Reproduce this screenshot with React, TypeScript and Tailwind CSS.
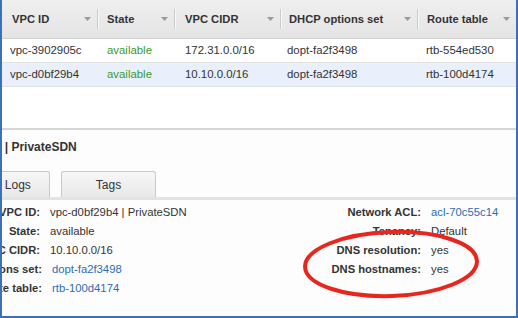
import React from "react"

const columns = [
  { title: "VPC ID", width: "w-[95px]", pad: "pl-[10px]", sep: false },
  { title: "State", width: "w-[77px]", pad: "pl-[9px]", sep: true },
  { title: "VPC CIDR", width: "w-[106px]", pad: "pl-[10px]", sep: true },
  { title: "DHCP options set", width: "w-[137px]", pad: "pl-[8px]", sep: true },
  { title: "Route table", width: "flex-1", pad: "pl-[9px]", sep: true },
]

const rows = [
  { id: "vpc-3902905c", state: "available", cidr: "172.31.0.0/16", dhcp: "dopt-fa2f3498", route: "rtb-554ed530", selected: false },
  { id: "vpc-d0bf29b4", state: "available", cidr: "10.10.0.0/16", dhcp: "dopt-fa2f3498", route: "rtb-100d4174", selected: true },
]

function Caret() {
  return (
    <svg width="7" height="4" viewBox="0 0 7 4" className="mr-[6px] shrink-0">
      <path d="M0 0 L7 0 L3.5 4 Z" fill="#9a9a9a" />
    </svg>
  )
}

function Detail({ label, value, link, labelWidth }: { label: string; value: string; link?: boolean; labelWidth: string }) {
  return (
    <div className="flex h-[19px] items-center">
      <span className={`${labelWidth} shrink-0 text-right font-bold whitespace-nowrap text-[11.2px]`}>{label}</span>
      <span className={`ml-[10px] whitespace-nowrap text-[11.3px] ${link ? "text-[#2b6cb8]" : "text-[#333]"}`}>
        {value}
      </span>
    </div>
  )
}

export default function App() {
  return (
    <div className="relative w-[518px] h-[318px] overflow-hidden bg-white border-x-2 border-b-2 border-[#3d71b3] font-['Liberation_Sans',Arial,sans-serif] text-[#333]">
      {/* table header */}
      <div className="flex h-[39px] bg-gradient-to-b from-[#efefef] to-[#e4e4e4] border-b border-[#d0d0d0]">
        {columns.map((col) => (
          <div key={col.title} className={`${col.width} flex items-center`}>
            {col.sep && <div className="h-[20px] w-px bg-[#cbcbcb] shadow-[1px_0_0_#f8f8f8]" />}
            <span className={`${col.pad} font-bold text-[11.2px] whitespace-nowrap`}>{col.title}</span>
            <div className="flex-1" />
            <Caret />
          </div>
        ))}
      </div>

      {/* table rows */}
      {rows.map((r) => (
        <div
          key={r.id}
          className={`flex h-[24px] items-center border-b border-[#e2e2e2] text-[11.4px] ${r.selected ? "bg-[#e9f0fb]" : "bg-white"}`}
        >
          <div className="w-[95px] pl-[8px]">{r.id}</div>
          <div className="w-[77px] pl-[10px] text-[#3a9a2e]">{r.state}</div>
          <div className="w-[106px] pl-[11px]">{r.cidr}</div>
          <div className="w-[137px] pl-[7px]">{r.dhcp}</div>
          <div className="flex-1 pl-[9px]">{r.route}</div>
        </div>
      ))}

      <div className="h-[41px]" />

      {/* details panel */}
      <div className="border-t-2 border-[#d6d6d6] bg-[#fdfdfd] h-full">
        <div className="pt-[10px] h-[24px] whitespace-nowrap font-bold text-[12px] leading-[14px]">
          <span className="-ml-[78px]">vpc-d0bf29b4 | PrivateSDN</span>
        </div>
        <div className="flex mt-[17px] h-[26px] items-end text-[12px]">
          <div className="-ml-[45px] w-[93px] h-[26px] shrink-0 flex items-center justify-center whitespace-nowrap rounded-t-[3px] border border-b-0 border-[#c9c9c9] bg-gradient-to-b from-[#f7f7f7] to-[#e8e8e8]">
            Flow Logs
          </div>
          <div className="ml-[11px] w-[95px] h-[26px] shrink-0 flex items-center justify-center rounded-t-[3px] border border-b-0 border-[#c9c9c9] bg-gradient-to-b from-[#f7f7f7] to-[#e8e8e8]">
            Tags
          </div>
        </div>
        <div className="border-t-[3px] border-[#e3e3e3] pt-[3px] flex">
          <div className="w-[391px] shrink-0 -ml-[92px]">
            <Detail labelWidth="w-[130px]" label="VPC ID:" value="vpc-d0bf29b4 | PrivateSDN" />
            <Detail labelWidth="w-[130px]" label="State:" value="available" />
            <Detail labelWidth="w-[130px]" label="VPC CIDR:" value="10.10.0.0/16" />
            <Detail labelWidth="w-[132px]" label="DHCP options set:" value="dopt-fa2f3498" link />
            <Detail labelWidth="w-[132px]" label="Route table:" value="rtb-100d4174" link />
          </div>
          <div className="flex-1">
            <Detail labelWidth="w-[120px]" label="Network ACL:" value="acl-70c55c14" link />
            <Detail labelWidth="w-[120px]" label="Tenancy:" value="Default" />
            <Detail labelWidth="w-[120px]" label="DNS resolution:" value="yes" />
            <Detail labelWidth="w-[120px]" label="DNS hostnames:" value="yes" />
          </div>
        </div>
      </div>

      {/* red annotation ellipse */}
      <svg className="absolute -left-[2px] top-0 pointer-events-none" width="518" height="318" viewBox="0 0 518 318">
        <ellipse
          cx="391"
          cy="264"
          rx="86"
          ry="32"
          fill="none"
          stroke="#e8261e"
          strokeWidth="4"
          transform="rotate(-2 391 264)"
        />
      </svg>
    </div>
  )
}
